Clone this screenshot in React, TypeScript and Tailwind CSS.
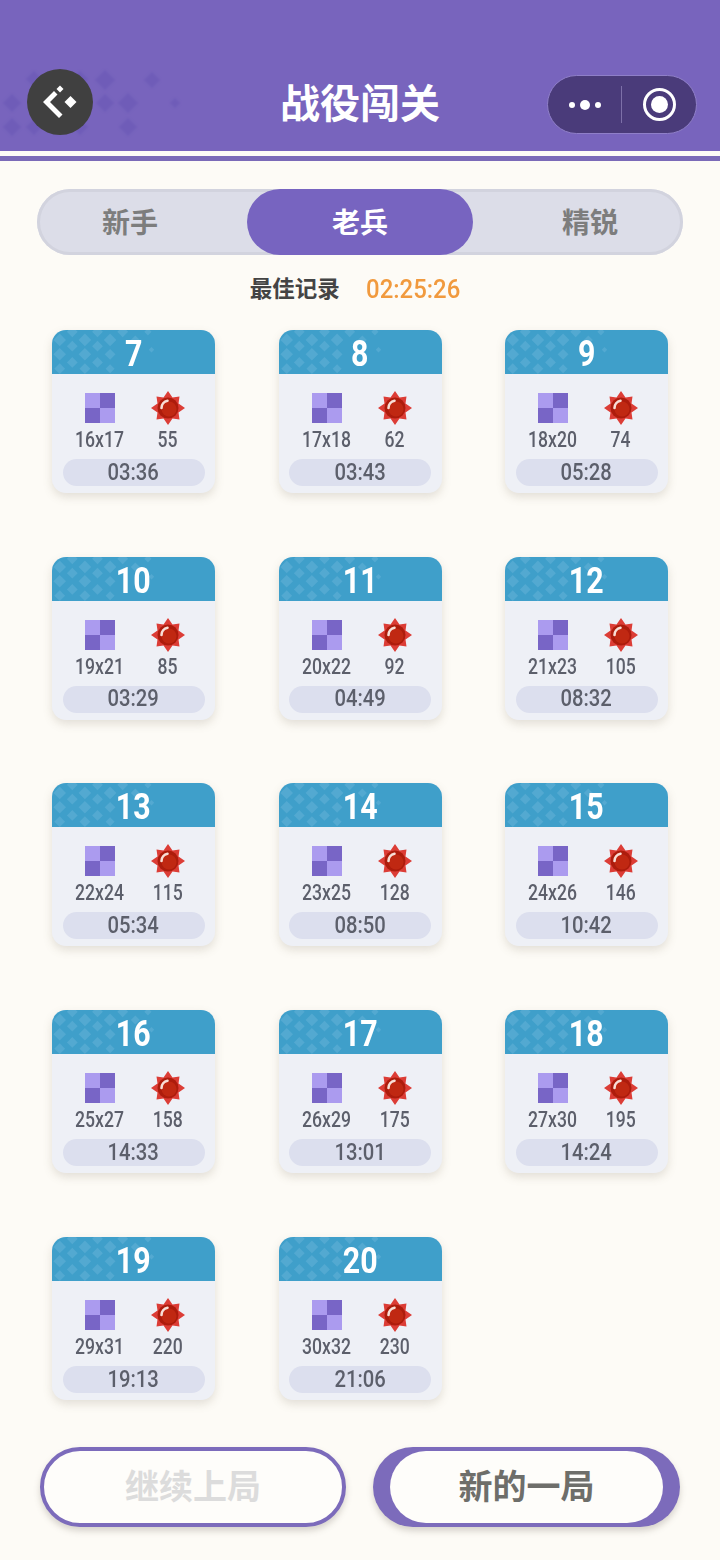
import type { ReactNode } from "react";

const digits = { fontFamily: "Roboto, 'Liberation Sans', sans-serif" };
const cjk = { fontFamily: "'Noto Sans CJK SC', 'Noto Sans', sans-serif" };

const levels = [
  { id: 7, size: "16x17", mines: 55, time: "03:36" },
  { id: 8, size: "17x18", mines: 62, time: "03:43" },
  { id: 9, size: "18x20", mines: 74, time: "05:28" },
  { id: 10, size: "19x21", mines: 85, time: "03:29" },
  { id: 11, size: "20x22", mines: 92, time: "04:49" },
  { id: 12, size: "21x23", mines: 105, time: "08:32" },
  { id: 13, size: "22x24", mines: 115, time: "05:34" },
  { id: 14, size: "23x25", mines: 128, time: "08:50" },
  { id: 15, size: "24x26", mines: 146, time: "10:42" },
  { id: 16, size: "25x27", mines: 158, time: "14:33" },
  { id: 17, size: "26x29", mines: 175, time: "13:01" },
  { id: 18, size: "27x30", mines: 195, time: "14:24" },
  { id: 19, size: "29x31", mines: 220, time: "19:13" },
  { id: 20, size: "30x32", mines: 230, time: "21:06" },
];

function Diamonds({ dots, fill, className }: { dots: number[][]; fill: string; className: string }) {
  return (
    <svg className={className} viewBox="0 0 180 80" fill={fill}>
      {dots.map(([x, y, r]) => (
        <path key={`${x}-${y}`} d={`M${x} ${y - r}L${x + r} ${y}L${x} ${y + r}L${x - r} ${y}Z`} />
      ))}
    </svg>
  );
}

const headerDots = [
  [12, 33, 9], [34, 9, 8], [57, 33, 9], [80, 9, 8], [12, 57, 9], [34, 57, 8], [57, 57, 8], [80, 57, 8],
  [105, 10, 10], [105, 33, 9], [128, 33, 10], [128, 57, 9], [152, 10, 8], [175, 33, 5],
];

const cardDots = [
  [8, 11, 7], [22, 2, 6], [36, 11, 7], [50, 2, 6], [64, 11, 7], [78, 2, 6], [92, 11, 5], [106, 2, 4],
  [8, 27, 7], [22, 18, 6], [36, 27, 7], [50, 18, 6], [64, 27, 6], [22, 36, 6], [50, 36, 6],
  [8, 43, 6], [36, 43, 6], [64, 43, 5], [110, 22, 3],
];

function BackIcon() {
  return (
    <svg width="36" height="36" viewBox="0 0 36 36" fill="#fff">
      <path d="M1 18L12 7L15.5 10.5L8 18L20.5 30.5L17 34Z" />
      <path d="M18 1.5L21.5 5L18 8.5L14.5 5Z" />
      <path d="M28.5 12L34.5 18L28.5 24L22.5 18Z" />
    </svg>
  );
}

function Checker() {
  return (
    <div className="grid h-[30px] w-[30px] grid-cols-2 grid-rows-2">
      <div className="bg-[#ab9bef]" />
      <div className="bg-[#7865c6]" />
      <div className="bg-[#7865c6]" />
      <div className="bg-[#ab9bef]" />
    </div>
  );
}

function Mine() {
  return (
    <svg width="34" height="34" viewBox="0 0 34 34">
      <path
        d="M17 0L21.5 6.5L28.5 5.5L27.5 12.5L34 17L27.5 21.5L28.5 28.5L21.5 27.5L17 34L12.5 27.5L5.5 28.5L6.5 21.5L0 17L6.5 12.5L5.5 5.5L12.5 6.5Z"
        fill="#dc3d36"
      />
      <circle cx="17" cy="17" r="10.5" fill="#ad1c0c" />
      <circle cx="18" cy="18" r="7.5" fill="#c02812" />
      <path d="M10.5 17C10.5 13.5 13 10.5 16.5 9.8" fill="none" stroke="#f8ded6" strokeWidth="2.6" strokeLinecap="round" />
    </svg>
  );
}

function LevelCard({ id, size, mines, time }: (typeof levels)[number]) {
  return (
    <div className="h-[163px] overflow-hidden rounded-[14px] bg-[#eef0f6] shadow-[0_4px_10px_rgba(120,110,90,0.2)]">
      <div className="relative flex h-[44px] items-center justify-center overflow-hidden bg-[#3f9fca]">
        <Diamonds dots={cardDots} fill="#53a9d1" className="absolute left-0 top-0 h-[72px] w-[163px] blur-[0.5px]" />
        <span
          className="relative inline-block scale-x-[0.82] pt-[3px] text-[37px] font-bold leading-none text-white"
          style={digits}
        >
          {id}
        </span>
      </div>
      <div className="mt-[17px] grid grid-cols-[96px_40px]">
        <div className="flex flex-col items-center">
          <div className="mt-[2px]">
            <Checker />
          </div>
          <span
            className="mt-[3px] inline-block scale-x-[0.8] text-[22px] font-medium leading-[28px] text-[#5c5f6b]"
            style={digits}
          >
            {size}
          </span>
        </div>
        <div className="flex flex-col items-center">
          <Mine />
          <span
            className="mt-px inline-block scale-x-[0.8] text-[22px] font-medium leading-[28px] text-[#5c5f6b]"
            style={digits}
          >
            {mines}
          </span>
        </div>
      </div>
      <div className="mx-auto mt-[5px] flex h-[27px] w-[142px] items-center justify-center rounded-full bg-[#dcdfee] pt-px">
        <span className="inline-block scale-x-[0.88] text-[23px] font-medium text-[#5c5f6b]" style={digits}>
          {time}
        </span>
      </div>
    </div>
  );
}

function Tab({ children, active }: { children: ReactNode; active?: boolean }) {
  return (
    <div
      className={
        active
          ? "flex h-[66px] items-center justify-center rounded-full bg-[#7764c0] pb-[2px] text-[28px] font-bold text-white"
          : "flex h-[66px] items-center justify-center pb-[2px] text-[28px] font-bold text-[#7d7d7d]"
      }
    >
      {children}
    </div>
  );
}

export default function App() {
  return (
    <div className="h-[1560px] w-[720px] overflow-hidden bg-[#fdfbf6]" style={cjk}>
      <header className="relative flex h-[151px] items-end justify-between bg-[#7864bd] pb-[16px] pl-[27px] pr-[23px]">
        <Diamonds dots={headerDots} fill="#6f5cb8" className="absolute left-0 top-[70px] h-[80px] w-[180px] blur-[1px]" />
        <button className="relative flex h-[66px] w-[66px] items-center justify-center rounded-full bg-[#404040]">
          <BackIcon />
        </button>
        <h1 className="absolute inset-x-0 top-[72px] text-center text-[40px] font-bold leading-[58px] text-white">
          战役闯关
        </h1>
        <div className="relative mb-px flex h-[59px] w-[150px] items-center rounded-full border border-[#8f7fc8] bg-[#4a3b7a]">
          <div className="flex w-[73px] items-center justify-center gap-[5px]">
            <span className="h-[6px] w-[6px] rounded-full bg-white" />
            <span className="h-[10px] w-[10px] rounded-full bg-white" />
            <span className="h-[6px] w-[6px] rounded-full bg-white" />
          </div>
          <span className="h-[37px] w-px bg-[#7d70a8]" />
          <div className="flex flex-1 items-center justify-center">
            <span className="flex h-[33px] w-[33px] items-center justify-center rounded-full border-[3px] border-white">
              <span className="h-[17px] w-[17px] rounded-full bg-white" />
            </span>
          </div>
        </div>
      </header>
      <div className="mt-[5px] h-[5px] bg-[#7b6ab8]" />
      <div className="pt-[28px]">
        <div className="mx-[37px] grid h-[66px] grid-cols-[186px_226px_186px] gap-[24px] rounded-full bg-[#dcdde8] shadow-[inset_0_0_0_3px_#d2d3de]">
          <Tab>新手</Tab>
          <Tab active>老兵</Tab>
          <Tab>精锐</Tab>
        </div>
        <div className="mt-[17px] flex h-[35px] items-center justify-center gap-[22px] pr-[6px]">
          <span className="pb-[4px] text-[22.5px] font-bold text-[#444444]">最佳记录</span>
          <span className="inline-block scale-x-[0.92] text-[26px] font-medium text-[#f19a3e]" style={digits}>
            02:25:26
          </span>
        </div>
      </div>
      <div className="mt-[22.75px] grid grid-cols-[163px_163px_163px] justify-between gap-y-[63.75px] px-[52px]">
        {levels.map((level) => (
          <LevelCard key={level.id} {...level} />
        ))}
      </div>
      <div className="mt-[47.25px] flex justify-between px-[40px]">
        <button className="flex h-[80px] w-[306px] items-center justify-center rounded-full border-[4px] border-[#7c6bbb] bg-[#fefdfa] pb-[6px] text-[34px] font-bold text-[#dcdcdc] shadow-[0_4px_6px_rgba(100,90,80,0.25)]">
          继续上局
        </button>
        <button className="flex h-[80px] w-[307px] rounded-full bg-[#7c6bbb] px-[17px] py-[4px] shadow-[0_4px_6px_rgba(100,90,80,0.25)]">
          <span className="flex flex-1 items-center justify-center rounded-full bg-[#fefdfa] pb-[6px] text-[34px] font-bold text-[#6e6e6a]">
            新的一局
          </span>
        </button>
      </div>
    </div>
  );
}
